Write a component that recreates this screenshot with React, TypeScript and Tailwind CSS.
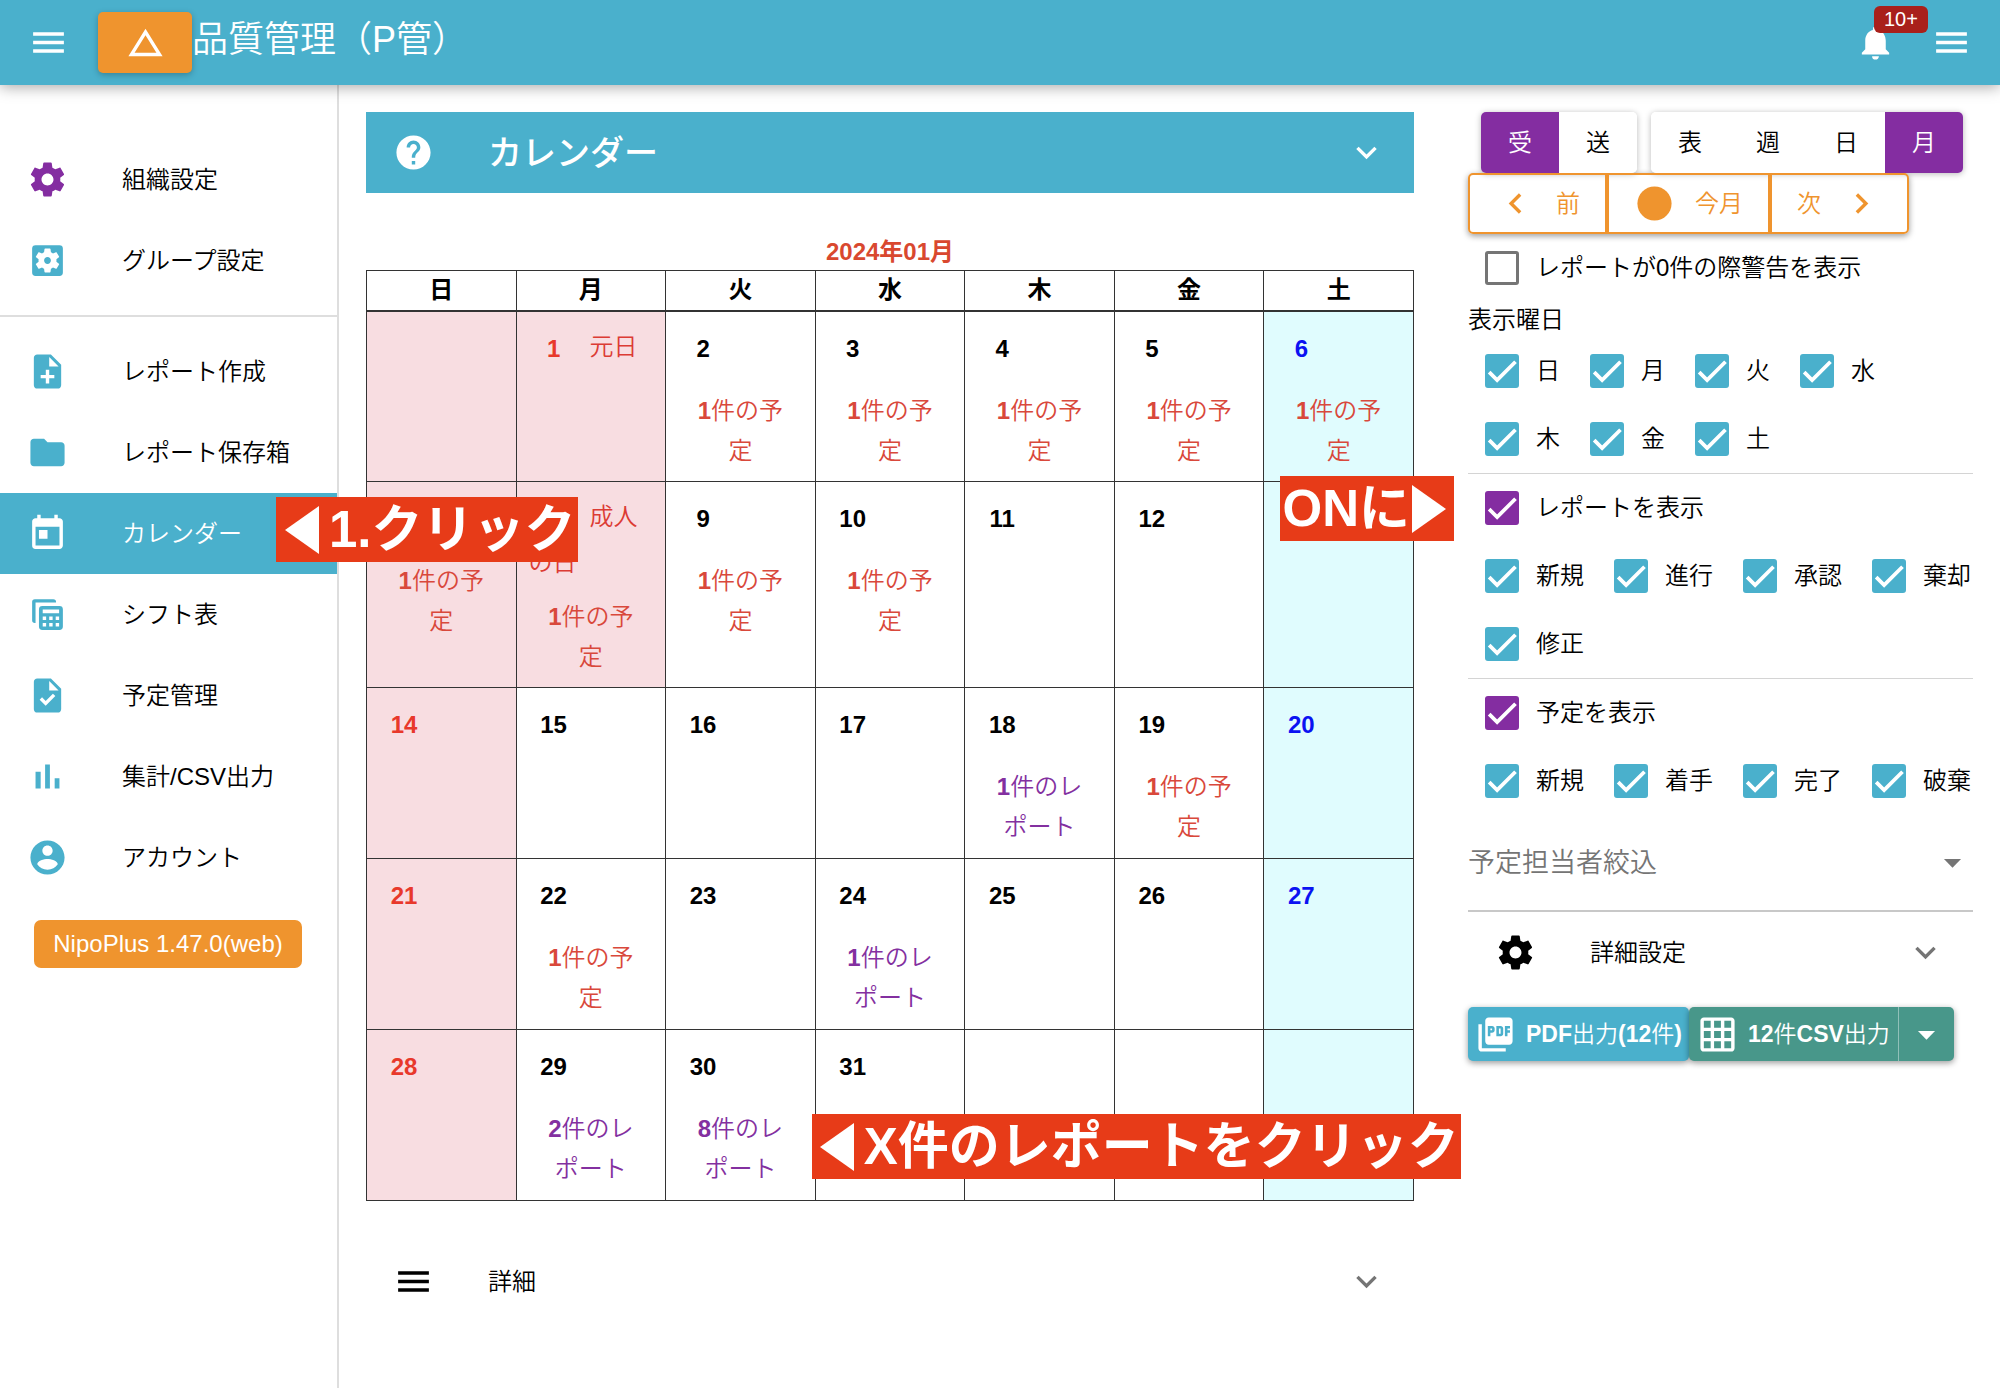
import React from "react";
import {
  MdArrowDropDown,
  MdChangeHistory,
  MdChevronLeft,
  MdChevronRight,
  MdExpandMore,
  MdFolder,
  MdGridOn,
  MdHelp,
  MdLens,
  MdMenu,
  MdNoteAdd,
  MdNotifications,
  MdPictureAsPdf,
  MdSettingsApplications,
  MdTask,
  MdToday,
} from "react-icons/md";

type IconProps = { className?: string };

function GearIcon({ className }: IconProps) {
  return (
    <svg viewBox="0 0 24 24" fill="currentColor" className={className} aria-hidden="true">
      <path d="M19.43 12.98c.04-.32.07-.64.07-.98s-.03-.66-.07-.98l2.11-1.65c.19-.15.24-.42.12-.64l-2-3.46c-.12-.22-.39-.3-.61-.22l-2.49 1c-.52-.4-1.08-.73-1.69-.98l-.38-2.65C14.46 2.18 14.25 2 14 2h-4c-.25 0-.46.18-.49.42l-.38 2.65c-.61.25-1.17.59-1.69.98l-2.49-1c-.23-.09-.49 0-.61.22l-2 3.46c-.13.22-.07.49.12.64l2.11 1.65c-.04.32-.07.65-.07.98s.03.66.07.98l-2.11 1.65c-.19.15-.24.42-.12.64l2 3.46c.12.22.39.3.61.22l2.49-1c.52.4 1.08.73 1.69.98l.38 2.65c.03.24.24.42.49.42h4c.25 0 .46-.18.49-.42l.38-2.65c.61-.25 1.17-.59 1.69-.98l2.49 1c.23.09.49 0 .61-.22l2-3.46c.12-.22.07-.49-.12-.64l-2.11-1.65zM12 15.5c-1.93 0-3.5-1.57-3.5-3.5s1.57-3.5 3.5-3.5 3.5 1.57 3.5 3.5-1.57 3.5-3.5 3.5z" />
    </svg>
  );
}

function ShiftIcon({ className }: IconProps) {
  return (
    <svg viewBox="0 0 24 24" fill="currentColor" className={className} aria-hidden="true">
      <path d="M17 5V4.600A1.600 1.600 0 0 0 15.400 3H4.600A1.600 1.600 0 0 0 3 4.600v10.800A1.600 1.600 0 0 0 4.600 17H5V5z" />
      <path
        fillRule="evenodd"
        d="M9 7h10a2 2 0 0 1 2 2v10a2 2 0 0 1-2 2H9a2 2 0 0 1-2-2V9a2 2 0 0 1 2-2zM9.200 9v2.200h9.600V9zM9.200 13.200v2h2v-2zM13 13.200v2h2v-2zM16.800 13.200v2h2v-2zM9.200 17v2h2v-2zM13 17v2h2v-2zM16.800 17v2h2v-2z"
      />
    </svg>
  );
}

function BarsIcon({ className }: IconProps) {
  return (
    <svg viewBox="0 0 24 24" fill="currentColor" className={className} aria-hidden="true">
      <path d="M5 9.200h3V19H5zM10.600 5h2.800v14h-2.800zM16.200 13H19v6h-2.800z" />
    </svg>
  );
}

function AccountIcon({ className }: IconProps) {
  return (
    <svg viewBox="0 0 24 24" fill="currentColor" className={className} aria-hidden="true">
      <path d="M12 2C6.480 2 2 6.480 2 12s4.480 10 10 10 10-4.480 10-10S17.520 2 12 2zm0 3c1.660 0 3 1.340 3 3s-1.340 3-3 3-3-1.340-3-3 1.340-3 3-3zm0 14.200c-2.500 0-4.710-1.280-6-3.220.03-1.990 4-3.080 6-3.080 1.990 0 5.970 1.090 6 3.080-1.290 1.940-3.500 3.220-6 3.220z" />
    </svg>
  );
}

const icon = "size-[41px] shrink-0";

function Callout({ className, arrow, children }: { className: string; arrow: "left" | "right"; children: React.ReactNode }) {
  return (
    <div
      className={`absolute z-20 flex h-[65px] items-center whitespace-nowrap bg-[#e73b18] text-[51px] leading-none font-bold text-white ${className}`}
    >
      {arrow === "left" && (
        <svg viewBox="0 0 34 48" className="mr-2.5 h-[48px] w-[34px] shrink-0" fill="currentColor" aria-hidden="true">
          <path d="M34 0v48L0 24z" />
        </svg>
      )}
      <span>{children}</span>
      {arrow === "right" && (
        <svg viewBox="0 0 34 48" className="ml-0.5 h-[48px] w-[34px] shrink-0" fill="currentColor" aria-hidden="true">
          <path d="M0 0v48l34-24z" />
        </svg>
      )}
    </div>
  );
}

function NavItem({ glyph, label, active, children }: { glyph: React.ReactNode; label: string; active?: boolean; children?: React.ReactNode }) {
  return (
    <li className="relative">
      <a
        href="#"
        className={`flex h-[81px] items-center px-[27px] ${active ? "bg-[#4ab0cc] text-white" : "text-[#4ab0cc]"}`}
      >
        <span className="w-[95px] shrink-0">{glyph}</span>
        <span className={active ? "text-white" : "text-black"}>{label}</span>
      </a>
      {children}
    </li>
  );
}

type Tone = "white" | "red" | "blue";
type Day = { n?: number; tone?: Tone; note?: string; count?: number; kind?: "plan" | "report"; callout?: string };

const weeks: Day[][] = [
  [
    { tone: "red" },
    { n: 1, tone: "red", note: "元日" },
    { n: 2, count: 1, kind: "plan" },
    { n: 3, count: 1, kind: "plan" },
    { n: 4, count: 1, kind: "plan" },
    { n: 5, count: 1, kind: "plan" },
    { n: 6, tone: "blue", count: 1, kind: "plan" },
  ],
  [
    { n: 7, tone: "red", count: 1, kind: "plan" },
    { n: 8, tone: "red", note: "成人の日", count: 1, kind: "plan" },
    { n: 9, count: 1, kind: "plan" },
    { n: 10, count: 1, kind: "plan" },
    { n: 11 },
    { n: 12 },
    { n: 13, tone: "blue" },
  ],
  [
    { n: 14, tone: "red" },
    { n: 15 },
    { n: 16 },
    { n: 17 },
    { n: 18, count: 1, kind: "report" },
    { n: 19, count: 1, kind: "plan" },
    { n: 20, tone: "blue" },
  ],
  [
    { n: 21, tone: "red" },
    { n: 22, count: 1, kind: "plan" },
    { n: 23 },
    { n: 24, count: 1, kind: "report" },
    { n: 25 },
    { n: 26 },
    { n: 27, tone: "blue" },
  ],
  [
    { n: 28, tone: "red" },
    { n: 29, count: 2, kind: "report" },
    { n: 30, count: 8, kind: "report" },
    { n: 31, callout: "X件のレポートをクリック" },
    {},
    {},
    { tone: "blue" },
  ],
];

const cellTone: Record<Tone, string> = { white: "bg-white", red: "bg-[#f8dde1]", blue: "bg-[#e0fcfe]" };
const dateTone: Record<Tone, string> = { white: "text-black", red: "text-[#e8382b]", blue: "text-[#0b12f2]" };

function DayCell({ day }: { day: Day }) {
  const tone = day.tone ?? "white";
  return (
    <td className={`relative h-[171px] border border-[#333] px-3 pt-[11px] pb-0 align-top ${cellTone[tone]}`}>
      {day.n !== undefined && (
        <div className="leading-9 text-[#dc3b34]">
          <button className={`mr-[11px] h-[52px] w-[50px] align-middle font-bold ${dateTone[tone]}`}>{day.n}</button>
          {day.note}
        </div>
      )}
      {day.count !== undefined && (
        <button
          className={`mt-4 block w-full px-[14px] pb-2.5 text-center leading-10 ${day.kind === "plan" ? "text-[#d9483b]" : "text-[#8330a0]"}`}
        >
          <span className="font-bold">{day.count}</span>
          {day.kind === "plan" ? "件の予定" : "件のレポート"}
        </button>
      )}
      {day.callout && (
        <Callout arrow="left" className="top-[84px] left-[-4px] pr-0.5 pl-2">
          {day.callout}
        </Callout>
      )}
    </td>
  );
}

function Check({ label, checked = true, accent }: { label: string; checked?: boolean; accent?: boolean }) {
  return (
    <label className="flex h-[68px] items-center whitespace-nowrap">
      <span className="grid size-[68px] shrink-0 place-items-center">
        <input
          type="checkbox"
          defaultChecked={checked}
          className={`peer col-start-1 row-start-1 size-[34px] appearance-none rounded-[3px] border-[3px] border-[#757575] ${
            accent ? "checked:border-[#842da1] checked:bg-[#842da1]" : "checked:border-[#4ab0cc] checked:bg-[#4ab0cc]"
          }`}
        />
        <svg
          viewBox="0 0 24 24"
          className="pointer-events-none invisible col-start-1 row-start-1 size-[30px] peer-checked:visible"
          fill="none"
          stroke="#fff"
          strokeWidth="3"
          aria-hidden="true"
        >
          <path d="M1.730 12.910 8.100 19.280 22.790 4.590" />
        </svg>
      </span>
      {label}
    </label>
  );
}

function CheckGroup({ labels }: { labels: string[] }) {
  return (
    <div className="flex flex-wrap gap-x-[13px]">
      {labels.map((l) => (
        <Check key={l} label={l} />
      ))}
    </div>
  );
}

function Segments({ items, active }: { items: string[]; active: string }) {
  return (
    <div className="flex overflow-hidden rounded-[5px] shadow-[0_1px_6px_rgba(0,0,0,0.28)]">
      {items.map((l) => (
        <button key={l} className={`h-[61px] w-[78px] ${l === active ? "bg-[#842da1] text-white" : "bg-white text-black"}`}>
          {l}
        </button>
      ))}
    </div>
  );
}

export default function App() {
  return (
    <div className="flex min-h-screen flex-col bg-white font-['Liberation_Sans','Noto_Sans_CJK_JP',sans-serif] text-[24px] leading-9 font-[350] text-black">
      <header className="relative z-10 flex h-[85px] shrink-0 items-center bg-[#4ab0cc] px-7 text-white shadow-[0_2px_14px_rgba(0,0,0,0.35)]">
        <button aria-label="メニュー">
          <MdMenu className={icon} />
        </button>
        <button
          aria-label="アラート"
          className="ml-[29px] grid h-[61px] w-[94px] place-items-center rounded-[5px] bg-[#ef942e] shadow-[0_2px_6px_rgba(0,0,0,0.25)]"
        >
          <MdChangeHistory className={icon} />
        </button>
        <h1 className="mb-1.5 text-[36px] leading-[50px] font-[350]">品質管理（P管）</h1>
        <button aria-label="通知" className="relative ml-auto">
          <MdNotifications className={icon} />
          <span className="absolute -top-4 left-[19px] rounded-md bg-[#a9201b] px-[10px] text-[20px] leading-[27px]">10+</span>
        </button>
        <button aria-label="サイドメニュー" className="ml-[35px]">
          <MdMenu className={icon} />
        </button>
      </header>

      <div className="flex flex-1">
        <nav className="w-[339px] shrink-0 border-r-2 border-[#dedede] pt-[54px]">
          <ul>
            <NavItem glyph={<GearIcon className={`${icon} text-[#842da1]`} />} label="組織設定" />
            <NavItem glyph={<MdSettingsApplications className={icon} />} label="グループ設定" />
          </ul>
          <hr className="my-3.5 border-t-2 border-[#dedede]" />
          <ul>
            <NavItem glyph={<MdNoteAdd className={icon} />} label="レポート作成" />
            <NavItem glyph={<MdFolder className={icon} />} label="レポート保存箱" />
            <NavItem glyph={<MdToday className={icon} />} label="カレンダー" active>
              <Callout arrow="left" className="top-1 left-[276px] pr-0.5 pl-[9px]">
                1.クリック
              </Callout>
            </NavItem>
            <NavItem glyph={<ShiftIcon className={icon} />} label="シフト表" />
            <NavItem glyph={<MdTask className={icon} />} label="予定管理" />
            <NavItem glyph={<BarsIcon className={icon} />} label="集計/CSV出力" />
            <NavItem glyph={<AccountIcon className={icon} />} label="アカウント" />
          </ul>
          <button className="mt-[22px] ml-[34px] h-[48px] w-[268px] rounded-[7px] bg-[#ef942e] text-white">NipoPlus 1.47.0(web)</button>
        </nav>

        <main className="min-w-0 flex-1 pt-[27px] pr-[54px] pl-[27px]">
          <button className="flex h-[81px] w-full items-center bg-[#4ab0cc] px-[27px] text-white">
            <span className="w-[95px]">
              <MdHelp className={icon} />
            </span>
            <span className="text-[34px] font-medium">カレンダー</span>
            <MdExpandMore className={`${icon} ml-auto`} />
          </button>

          <table className="mt-[41px] w-full table-fixed border-collapse">
            <caption className="font-bold text-[#d9482f]">2024年01月</caption>
            <thead>
              <tr>
                {["日", "月", "火", "水", "木", "金", "土"].map((d) => (
                  <th key={d} scope="col" className="h-10 border border-b-2 border-[#333] p-0 font-bold">
                    {d}
                  </th>
                ))}
              </tr>
            </thead>
            <tbody>
              {weeks.map((week, i) => (
                <tr key={i}>
                  {week.map((day, j) => (
                    <DayCell key={j} day={day} />
                  ))}
                </tr>
              ))}
            </tbody>
          </table>

          <button className="mt-10 flex h-[81px] w-full items-center px-[27px]">
            <span className="w-[95px]">
              <MdMenu className={icon} />
            </span>
            <span>詳細</span>
            <MdExpandMore className={`${icon} ml-auto text-[#757575]`} />
          </button>
        </main>

        <aside className="mr-[27px] w-[505px] shrink-0 pt-[27px]">
          <div className="flex gap-3.5 pl-[13px]">
            <Segments items={["受", "送"]} active="受" />
            <Segments items={["表", "週", "日", "月"]} active="月" />
          </div>
          <div className="flex h-[61px] w-fit rounded-[5px] bg-white text-[#ef942e] shadow-[0_2px_6px_rgba(0,0,0,0.4)]">
            <button className="flex items-center gap-5 rounded-l-[5px] border-2 border-[#ef942e] px-[25px]">
              <MdChevronLeft className={icon} />前
            </button>
            <button className="flex items-center gap-5 border-2 border-[#ef942e] px-[25px]">
              <MdLens className={icon} />
              今月
            </button>
            <button className="flex items-center gap-5 rounded-r-[5px] border-2 border-[#ef942e] px-[25px]">
              次
              <MdChevronRight className={icon} />
            </button>
          </div>

          <Check label="レポートが0件の際警告を表示" checked={false} />
          <p className="leading-[35px]">表示曜日</p>
          <CheckGroup labels={["日", "月", "火", "水", "木", "金", "土"]} />

          <div className="relative border-t border-[#d4d4d4]">
            <Check label="レポートを表示" accent />
            <Callout arrow="right" className="top-0.5 right-full mr-3.5 pr-2 pl-0.5">
              ONに
            </Callout>
          </div>
          <CheckGroup labels={["新規", "進行", "承認", "棄却", "修正"]} />

          <div className="border-t border-[#d4d4d4]">
            <Check label="予定を表示" accent />
          </div>
          <CheckGroup labels={["新規", "着手", "完了", "破棄"]} />

          <div className="relative border-b-2 border-[#c8c8c8]">
            <select aria-label="予定担当者絞込" className="h-[95px] w-full appearance-none bg-transparent text-[27px] text-[#757575]">
              <option>予定担当者絞込</option>
            </select>
            <MdArrowDropDown className={`${icon} pointer-events-none absolute top-[27px] right-0 text-[#757575]`} />
          </div>

          <button className="flex h-[81px] w-full items-center px-[27px]">
            <span className="w-[95px]">
              <GearIcon className={icon} />
            </span>
            <span>詳細設定</span>
            <MdExpandMore className={`${icon} ml-auto text-[#757575]`} />
          </button>

          <div className="mt-3.5 flex h-[54px] text-[23px] whitespace-nowrap text-white">
            <button className="flex items-center gap-2.5 rounded-[5px] bg-[#4ab0cc] px-[7px] shadow-[0_2px_6px_rgba(0,0,0,0.4)]">
              <MdPictureAsPdf className={icon} />
              <span>
                <span className="font-bold">PDF</span>出力<span className="font-bold">(12</span>件<span className="font-bold">)</span>
              </span>
            </button>
            <div className="flex rounded-[5px] bg-[#48978a] shadow-[0_2px_6px_rgba(0,0,0,0.4)]">
              <button className="flex items-center gap-2.5 border-r border-white/40 px-2">
                <MdGridOn className={icon} />
                <span>
                  <span className="font-bold">12</span>件<span className="font-bold">CSV</span>出力
                </span>
              </button>
              <button aria-label="CSV出力オプション" className="px-[7px]">
                <MdArrowDropDown className={icon} />
              </button>
            </div>
          </div>
        </aside>
      </div>
    </div>
  );
}
